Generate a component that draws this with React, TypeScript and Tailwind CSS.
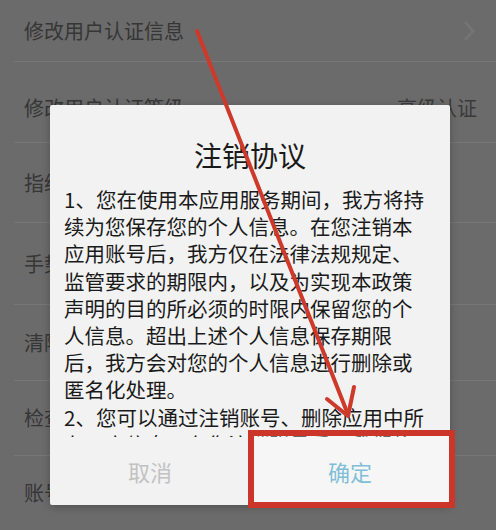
import React from "react";

const rows: { label: string; h: string; value?: string; chevron?: boolean }[] = [
  { label: "修改用户认证信息", h: "h-[62px]", chevron: true },
  { label: "修改用户认证等级", h: "h-[81px] pt-[12px]", value: "高级认证" },
  { label: "指纹登录", h: "h-[80px]" },
  { label: "手势密码", h: "h-[82px]" },
  { label: "清除缓存", h: "h-[76px]" },
  { label: "检查更新", h: "h-[75px]" },
  { label: "账号注销", h: "h-[75px]" },
];

const lines = [
  "1、您在使用本应用服务期间，我方将持",
  "续为您保存您的个人信息。在您注销本",
  "应用账号后，我方仅在法律法规规定、",
  "监管要求的期限内，以及为实现本政策",
  "声明的目的所必须的时限内保留您的个",
  "人信息。超出上述个人信息保存期限",
  "后，我方会对您的个人信息进行删除或",
  "匿名化处理。",
  "2、您可以通过注销账号、删除应用中所",
  "有用户信息，在您注销账号后，我们将",
];

export default function App() {
  return (
    <div className="relative w-[496px] h-[530px] overflow-hidden bg-[#6b6b6b] font-['Noto_Sans_CJK_SC','Noto_Sans',sans-serif]">
      {/* background settings list */}
      <div className="flex flex-col pl-[14px]">
        {rows.map((r, i) => (
          <div
            key={i}
            className={`${r.h} flex items-center justify-between pl-[10px] border-b border-[#777777]`}
          >
            <span className="text-[20px] leading-none text-[#363636]">{r.label}</span>
            {r.value && <span className="text-[20px] leading-none text-[#3a3a3a] mr-[19px]">{r.value}</span>}
            {r.chevron && (
              <svg width="14" height="24" viewBox="0 0 14 24" className="mr-[20px]">
                <path d="M3 3 L11 12 L3 21" fill="none" stroke="#747474" strokeWidth="3" />
              </svg>
            )}
          </div>
        ))}
      </div>

      {/* dialog */}
      <div className="absolute left-[50px] top-[105px] w-[400px] h-[400px] bg-[#f2f2f2] rounded-[2px] shadow-[0_2px_8px_rgba(0,0,0,0.25)] flex flex-col">
        <div className="pt-[32px] h-[81px] text-center text-[28px] leading-[36px] text-[#1a1a1a]">注销协议</div>
        <div className="h-[251px] overflow-hidden px-[14px] text-[20.5px] leading-[27.2px] text-[#1a1a1a]">
          {lines.map((l, i) => (
            <div key={i} className="whitespace-nowrap">{l}</div>
          ))}
        </div>
        <div className="flex flex-1 items-center">
          <div className="w-1/2 text-center text-[22px] leading-none text-[#c2c2c2]">取消</div>
          <div className="w-1/2 text-center text-[22px] leading-none text-[#3d9cc2]">确定</div>
        </div>
      </div>

      {/* annotation overlay */}
      <svg className="absolute left-0 top-0 pointer-events-none" width="496" height="530" viewBox="0 0 496 530">
        <rect x="251" y="433" width="201" height="72" fill="rgba(255,255,255,0.35)" stroke="#cc3529" strokeWidth="6" />
        <line x1="197" y1="31" x2="347" y2="412" stroke="#cd3a2b" strokeWidth="4" strokeLinecap="round" />
        <path d="M327 399 L348 416 L354 387" fill="none" stroke="#cd3a2b" strokeWidth="4" strokeLinecap="round" strokeLinejoin="round" />
      </svg>
    </div>
  );
}
